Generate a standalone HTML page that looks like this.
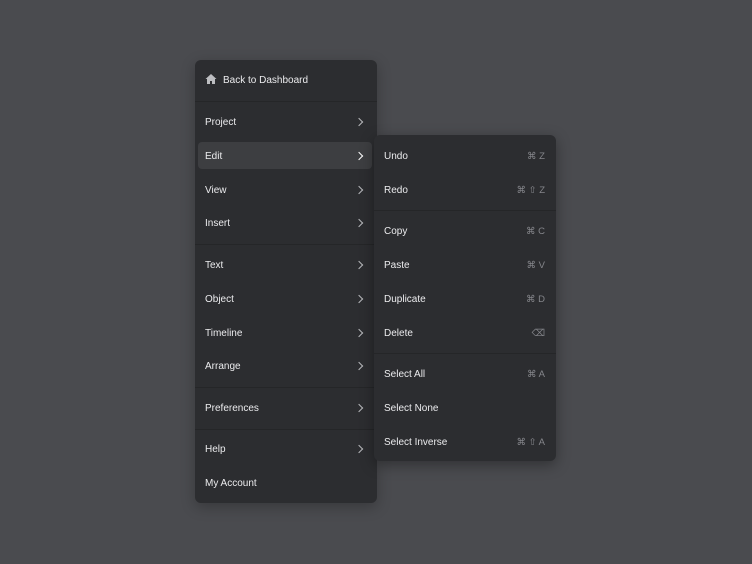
<!DOCTYPE html>
<html><head><style>
body{margin:0;width:752px;height:564px;background:#4a4b4f;font-family:"Liberation Sans",sans-serif;font-size:10px;color:#ececee;position:relative;overflow:hidden}
.m{position:absolute;background:#2c2d30;border-radius:6px;box-shadow:0 4px 14px rgba(0,0,0,.25)}
.t{position:absolute;line-height:12px;transform:translateY(-4px);white-space:nowrap}
.s{position:absolute;height:1px;background:#252628}
.k{position:absolute;right:11px;color:#85868b;font-size:9.5px;line-height:12px;transform:translateY(-4px)}
.c{position:absolute;left:161px;width:5px;height:5px;border-right:1.3px solid #b8b9bc;border-top:1.3px solid #b8b9bc;transform:translateY(-2px) rotate(45deg)}
</style></head><body>
<div class="m" style="left:195px;top:60px;width:182px;height:443px">
<div style="position:absolute;left:3px;top:82px;width:174px;height:27px;background:#3d3e41;border-radius:4px"></div>
<svg style="position:absolute;left:10px;top:13px" width="12" height="12" viewBox="0 0 12 12"><path d="M6 1L0.5 6H2v5h3V8h2v3h3V6h1.5z" fill="#bdbec1"/></svg>
<div class="t" style="left:28px;top:19px">Back to Dashboard</div>
<div class="s" style="left:0;right:0;top:41px"></div>
<div class="t" style="left:10px;top:61px">Project</div><div class="c" style="top:61px"></div>
<div class="t" style="left:10px;top:95px">Edit</div><div class="c" style="top:95px;border-color:#fff"></div>
<div class="t" style="left:10px;top:129px">View</div><div class="c" style="top:129px"></div>
<div class="t" style="left:10px;top:162px">Insert</div><div class="c" style="top:162px"></div>
<div class="s" style="left:0;right:0;top:184px"></div>
<div class="t" style="left:10px;top:204px">Text</div><div class="c" style="top:204px"></div>
<div class="t" style="left:10px;top:238px">Object</div><div class="c" style="top:238px"></div>
<div class="t" style="left:10px;top:272px">Timeline</div><div class="c" style="top:272px"></div>
<div class="t" style="left:10px;top:305px">Arrange</div><div class="c" style="top:305px"></div>
<div class="s" style="left:0;right:0;top:327px"></div>
<div class="t" style="left:10px;top:347px">Preferences</div><div class="c" style="top:347px"></div>
<div class="s" style="left:0;right:0;top:369px"></div>
<div class="t" style="left:10px;top:388px">Help</div><div class="c" style="top:388px"></div>
<div class="t" style="left:10px;top:422px">My Account</div>
</div>
<div class="m" style="left:374px;top:135px;width:182px;height:326px;box-shadow:0 4px 14px rgba(0,0,0,.35)">
<div class="t" style="left:10px;top:20px">Undo</div><div class="k" style="top:20px">⌘ Z</div>
<div class="t" style="left:10px;top:54px">Redo</div><div class="k" style="top:54px">⌘ ⇧ Z</div>
<div class="s" style="left:0;right:0;top:75px"></div>
<div class="t" style="left:10px;top:95px">Copy</div><div class="k" style="top:95px">⌘ C</div>
<div class="t" style="left:10px;top:129px">Paste</div><div class="k" style="top:129px">⌘ V</div>
<div class="t" style="left:10px;top:163px">Duplicate</div><div class="k" style="top:163px">⌘ D</div>
<div class="t" style="left:10px;top:197px">Delete</div><div class="k" style="top:197px">⌫</div>
<div class="s" style="left:0;right:0;top:218px"></div>
<div class="t" style="left:10px;top:238px">Select All</div><div class="k" style="top:238px">⌘ A</div>
<div class="t" style="left:10px;top:272px">Select None</div>
<div class="t" style="left:10px;top:306px">Select Inverse</div><div class="k" style="top:306px">⌘ ⇧ A</div>
</div>
</body></html>
